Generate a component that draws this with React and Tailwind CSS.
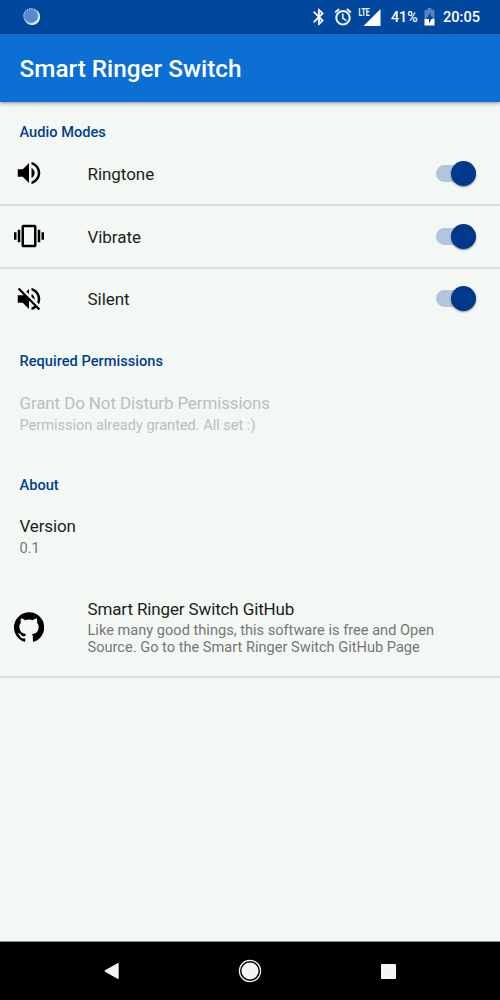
import React from 'react';

const icons = {
  ringtone:
    'M3 9v6h4l5 5V4L7 9H3zm13.5 3c0-1.77-1.02-3.29-2.5-4.03v8.05c1.48-.73 2.5-2.25 2.5-4.02zM14 3.23v2.06c2.89.86 5 3.54 5 6.71s-2.11 5.85-5 6.71v2.06c4.01-.91 7-4.49 7-8.77s-2.99-7.86-7-8.77z',
  vibrate:
    'M0 15h2V9H0v6zm3 2h2V7H3v10zm19-8v6h2V9h-2zm-3 8h2V7h-2v10zM16.5 3h-9C6.67 3 6 3.67 6 4.5v15c0 .83.67 1.5 1.5 1.5h9c.83 0 1.5-.67 1.5-1.5v-15c0-.83-.67-1.5-1.5-1.5zM16 19H8V5h8v14z',
  silent:
    'M16.5 12c0-1.77-1.02-3.29-2.5-4.03v2.21l2.45 2.45c.03-.2.05-.41.05-.63zm2.5 0c0 .94-.2 1.82-.54 2.64l1.51 1.51C20.63 14.91 21 13.5 21 12c0-4.28-2.99-7.86-7-8.77v2.06c2.89.86 5 3.54 5 6.71zM4.27 3L3 4.27 7.73 9H3v6h4l5 5v-6.73l4.25 4.25c-.67.52-1.42.93-2.25 1.18v2.06c1.38-.31 2.63-.95 3.69-1.81L19.73 21 21 19.73l-9-9L4.27 3zM12 4L9.91 6.09 12 8.18V4z',
  bluetooth:
    'M17.71 7.71L12 2h-1v7.59L6.41 5 5 6.41 10.59 12 5 17.59 6.41 19 11 14.41V22h1l5.71-5.71-4.3-4.29 4.3-4.29zM13 5.83l1.88 1.88L13 9.59V5.83zm1.88 10.46L13 18.17v-3.76l1.88 1.88z',
  alarm:
    'M22 5.72l-4.6-3.86-1.29 1.53 4.6 3.86L22 5.72zM7.88 3.39L6.6 1.86 2 5.71l1.29 1.53 4.59-3.85zM12.5 8H11v6l4.75 2.85.75-1.23-4-2.37V8zM12 4c-4.97 0-9 4.03-9 9s4.02 9 9 9c4.97 0 9-4.03 9-9s-4.03-9-9-9zm0 16c-3.87 0-7-3.13-7-7s3.13-7 7-7 7 3.13 7 7-3.13 7-7 7z',
  github:
    'M12 .3a12 12 0 0 0-3.8 23.4c.6.1.8-.3.8-.6v-2c-3.3.7-4-1.6-4-1.6-.6-1.4-1.4-1.8-1.4-1.8-1-.7.1-.7.1-.7 1.2 0 1.9 1.2 1.9 1.2 1 1.8 2.8 1.3 3.5 1 0-.8.4-1.3.7-1.6-2.7-.3-5.5-1.3-5.5-6 0-1.2.5-2.3 1.3-3.1-.2-.4-.6-1.6 0-3.2 0 0 1-.3 3.4 1.2a11.500 11.500 0 0 1 6 0c2.300-1.500 3.300-1.200 3.300-1.200.6 1.600.2 2.800.1 3.200.8.800 1.300 1.900 1.300 3.200 0 4.600-2.800 5.600-5.500 5.900.5.400.9 1.100.9 2.200v3.300c0 .3.1.7.8.6A12 12 0 0 0 12 .3',
};

function Icon({ path, className, bold }) {
  return (
    <svg viewBox="0 0 24 24" fill="currentColor" stroke="currentColor" strokeWidth={bold ? 0.3 : 0} className={`shrink-0 ${className}`}>
      <path d={path} />
    </svg>
  );
}

function StatusBar() {
  return (
    <div className="flex h-[34px] shrink-0 items-center bg-[#00479d] pl-[22px] text-white">
      <svg viewBox="0 0 20 20" className="mt-px size-5">
        <circle cx="10.100" cy="9" r="8" fill="#f4f9ff" />
        <circle cx="9" cy="7.900" r="7.300" fill="#568bcb" />
        <circle cx="9" cy="7.900" r="7.300" fill="none" stroke="#a9c5e5" strokeWidth="1.200" strokeDasharray="1.300 1" />
      </svg>
      <Icon path={icons.bluetooth} bold className="ml-[266.500px] size-5" />
      <Icon path={icons.alarm} bold className="ml-[4.500px] size-5" />
      <svg viewBox="0 0 24 20" className="ml-[5px] h-5 w-6">
        <path d="M22.500 2v17H5.500z" fill="white" />
        <path d="M0 0h12v10H0z" fill="#00479d" />
        <text x="0.500" y="9" fontSize="10" fontWeight="700" fill="white" textLength="11" lengthAdjust="spacingAndGlyphs" className="font-['Roboto']">
          LTE
        </text>
      </svg>
      <span className="ml-[9px] w-[28px] text-[14.200px] font-medium leading-5">41%</span>
      <svg viewBox="0 0 11 18" className="ml-[5px] h-[18px] w-[11px]">
        <path d="M3.500 0h4v2H10q.5 0 .5.500v8.500H.5V2.500Q.5 2 1 2h2.500z" fill="#5586c0" />
        <path d="M.5 11h10v6q0 .5-.5.500H1q-.5 0-.5-.500z" fill="white" />
        <path d="M6.500 4L2.500 11h2.500v4.500l4-7H6.500z" fill="#00479d" />
      </svg>
      <span className="ml-[8px] text-[14.600px] font-medium leading-5">20:05</span>
    </div>
  );
}

function Toggle() {
  return (
    <div className="flex h-[17px] w-[40px] items-center rounded-full bg-[#b2c5da]">
      <div className="ml-auto size-[25px] shrink-0 rounded-full bg-[#00388b] shadow-[0_1px_2px_rgba(0,0,0,0.45)]" />
    </div>
  );
}

function ModeRow({ icon, label, last }) {
  return (
    <div className={`flex items-center border-b-2 pb-px pl-[14px] pr-[24px] ${last ? 'h-[62px] border-transparent' : 'h-[63px] border-[#d9dddb]'}`}>
      <Icon path={icon} className="size-[30px] text-black" />
      <span className="ml-[43.500px] flex-1 pt-px text-[17px] leading-5 tracking-[-0.05px]">{label}</span>
      <Toggle />
    </div>
  );
}

function Heading({ children }) {
  return <h2 className="pl-[19.500px] text-[14.600px] font-medium leading-5 tracking-[0.02px] text-[#003f8e]">{children}</h2>;
}

export default function App() {
  return (
    <div className="flex h-[1000px] w-[500px] flex-col overflow-hidden bg-[#f4f8f5] font-['Roboto',sans-serif] text-[#1c1e1d]">
      <StatusBar />
      <header className="z-10 flex h-[68px] shrink-0 items-center bg-[#0b6fd3] pl-[19.500px] pt-[2px] shadow-[0_1px_4px_rgba(0,0,0,0.45)]">
        <h1 className="text-[24.300px] font-medium text-white">Smart Ringer Switch</h1>
      </header>
      <main className="flex flex-1 flex-col">
        <section className="pt-5">
          <Heading>Audio Modes</Heading>
          <div className="pt-px">
            <ModeRow icon={icons.ringtone} label="Ringtone" />
            <ModeRow icon={icons.vibrate} label="Vibrate" />
            <ModeRow icon={icons.silent} label="Silent" last />
          </div>
        </section>
        <section className="pt-[20px]">
          <Heading>Required Permissions</Heading>
          <div className="pl-[19.500px] pt-[22px] text-[#bbbebc]">
            <div className="text-[17px] leading-5 tracking-[-0.13px]">Grant Do Not Disturb Permissions</div>
            <div className="pt-[4px] text-[14.600px] leading-[17px] tracking-[-0.03px]">Permission already granted. All set :)</div>
          </div>
        </section>
        <section className="pt-[41px]">
          <Heading>About</Heading>
          <div className="pl-[19.500px] pt-[21px]">
            <div className="text-[17px] leading-5 tracking-[-0.13px]">Version</div>
            <div className="pt-[4px] text-[14.600px] leading-[17px] text-[#747775]">0.1</div>
          </div>
          <div className="mt-[22px] flex h-[99px] items-center border-b-2 border-[#dde0de] pl-[14px]">
            <Icon path={icons.github} className="-mt-px size-[30px] text-black" />
            <div className="ml-[43.500px] w-[370px]">
              <div className="text-[17px] leading-5 tracking-[-0.13px]">Smart Ringer Switch GitHub</div>
              <div className="pt-[3px] text-[14.600px] leading-[17px] text-[#747775]">
                Like many good things, this software is free and Open Source. Go to the Smart Ringer Switch GitHub Page
              </div>
            </div>
          </div>
        </section>
      </main>
      <nav className="flex h-[59px] shrink-0 items-center justify-between border-t border-[#8b8d8c] bg-black pl-[103.500px] pr-[104.500px] text-[#f4f6f5]">
        <svg viewBox="0 0 16 18" className="h-[18px] w-4" fill="currentColor">
          <path d="M13.500 1.300q1.200-.6 1.200.6v14.300q0 1.200-1.200.6L1 9.800q-1-.8 0-1.500z" />
        </svg>
        <svg viewBox="0 0 24 24" className="size-6">
          <circle cx="12" cy="12" r="10.600" fill="none" stroke="currentColor" strokeWidth="1.200" />
          <circle cx="12" cy="12" r="8.500" fill="currentColor" />
        </svg>
        <div className="size-[15px] rounded-[1px] bg-[#f4f6f5]" />
      </nav>
    </div>
  );
}
